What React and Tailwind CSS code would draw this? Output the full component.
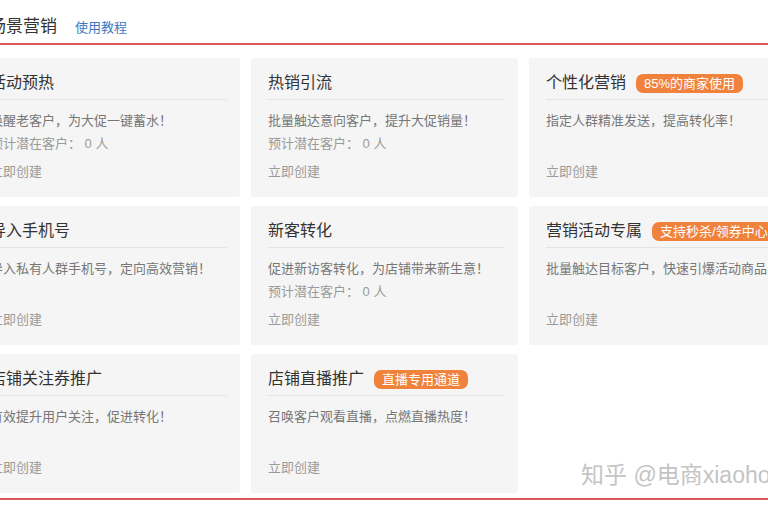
const cards = [
  { title: '活动预热', desc: '唤醒老客户，为大促一键蓄水！', potential: true },
  { title: '热销引流', desc: '批量触达意向客户，提升大促销量！', potential: true },
  { title: '个性化营销', badge: '85%的商家使用', desc: '指定人群精准发送，提高转化率！' },
  { title: '导入手机号', desc: '导入私有人群手机号，定向高效营销！' },
  { title: '新客转化', desc: '促进新访客转化，为店铺带来新生意！', potential: true },
  { title: '营销活动专属', badge: '支持秒杀/领券中心活动', desc: '批量触达目标客户，快速引爆活动商品！' },
  { title: '店铺关注券推广', desc: '有效提升用户关注，促进转化！' },
  { title: '店铺直播推广', badge: '直播专用通道', desc: '召唤客户观看直播，点燃直播热度！' },
]

function Card({ title, badge, desc, potential }) {
  return (
    <div className="h-[139px] bg-[#f5f5f5] rounded-[3px] pl-[17px] pr-[13px] pt-[15px] pb-[15px] flex flex-col overflow-hidden">
      <div className="flex items-center border-b border-[#e4e4e4] pb-[6px] whitespace-nowrap">
        <span className="text-[16px] leading-[20px] text-[#333]">{title}</span>
        {badge && (
          <span className="ml-[10px] bg-[#f0823b] text-white text-[13px] leading-[19px] h-[19px] px-2 rounded-[7px]">
            {badge}
          </span>
        )}
      </div>
      <p className="mt-[11px] text-[13px] leading-[20px] text-[#777] whitespace-nowrap">{desc}</p>
      {potential && (
        <p className="mt-[3px] text-[13px] leading-[20px] text-[#9a9a9a] whitespace-nowrap">
          预计潜在客户： 0 人
        </p>
      )}
      <p className="mt-auto text-[13px] leading-[20px] text-[#9a9a9a]">立即创建</p>
    </div>
  )
}

export default function App() {
  return (
    <div
      className="relative w-[768px] h-[510px] overflow-hidden bg-white"
      style={{ fontFamily: '"Liberation Sans", "Noto Sans CJK SC", sans-serif' }}
    >
      <div className="h-[43px] flex items-end pb-[4px] ml-[-11px] whitespace-nowrap">
        <span className="text-[17px] leading-[24px] text-[#333]">场景营销</span>
        <span className="ml-[18px] mb-[1px] text-[13px] leading-[20px] text-[#3a78c3]">使用教程</span>
      </div>
      <div className="border-t-2 border-b-2 border-[#d75a5c] pt-[13px] pb-[5px]">
        <div className="ml-[-27px] grid grid-cols-[267px_267px_267px] gap-x-[11px] gap-y-[9px]">
          {cards.map((c) => (
            <Card key={c.title} {...c} />
          ))}
        </div>
      </div>
      <div className="absolute left-[581px] top-[461px] text-[23px] leading-[28px] text-[#c4c4c4] whitespace-nowrap [text-shadow:0_0_1px_#fff]">
        知乎 @电商xiaohong
      </div>
    </div>
  )
}
